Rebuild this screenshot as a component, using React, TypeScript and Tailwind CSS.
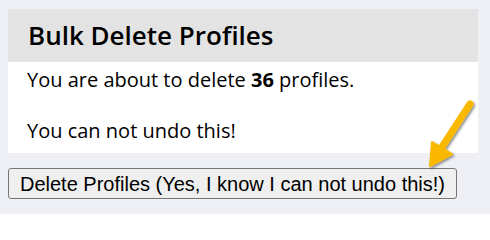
export default function App() {
  return (
    <div className="relative h-[214px] w-full overflow-hidden bg-[#eff0f5] pt-[9px] pl-2" style={{ fontFamily: '"Open Sans", "Noto Sans", sans-serif' }}>
      <div className="w-[470px]">
        <div className="flex h-[53px] items-center bg-[#e3e3e3] px-[20px]">
          <h1 className="text-[26px] font-semibold text-black">Bulk Delete Profiles</h1>
        </div>
        <div className="bg-white px-[19px] pt-[3px] pb-[7px] text-[20px] leading-[30px] text-black">
          <p>
            You are about to delete <b className="font-bold">36</b> profiles.
          </p>
          <p className="mt-[21px]">You can not undo this!</p>
        </div>
      </div>
      <button
        className="mt-[15px] h-[31px] w-[449px] rounded-[3px] border border-[#767676] bg-[#efefef] text-[20px] text-black"
        style={{ fontFamily: '"Liberation Sans", Arial, sans-serif' }}
      >
        Delete Profiles (Yes, I know I can not undo this!)
      </button>
      <svg className="absolute left-[420px] top-[96px]" width="64" height="80" viewBox="0 0 64 80">
        <defs>
          <filter id="sh" x="-30%" y="-30%" width="160%" height="160%">
            <feDropShadow dx="1.5" dy="1.5" stdDeviation="1.2" floodColor="#000" floodOpacity="0.45" />
          </filter>
        </defs>
        <g filter="url(#sh)">
          <line x1="50" y1="8" x2="20" y2="54" stroke="#fbb800" strokeWidth="7" strokeLinecap="round" />
          <polygon points="10,70 12,46 32,58" fill="#fbb800" stroke="#fbb800" strokeWidth="2" strokeLinejoin="round" />
        </g>
      </svg>
    </div>
  )
}
